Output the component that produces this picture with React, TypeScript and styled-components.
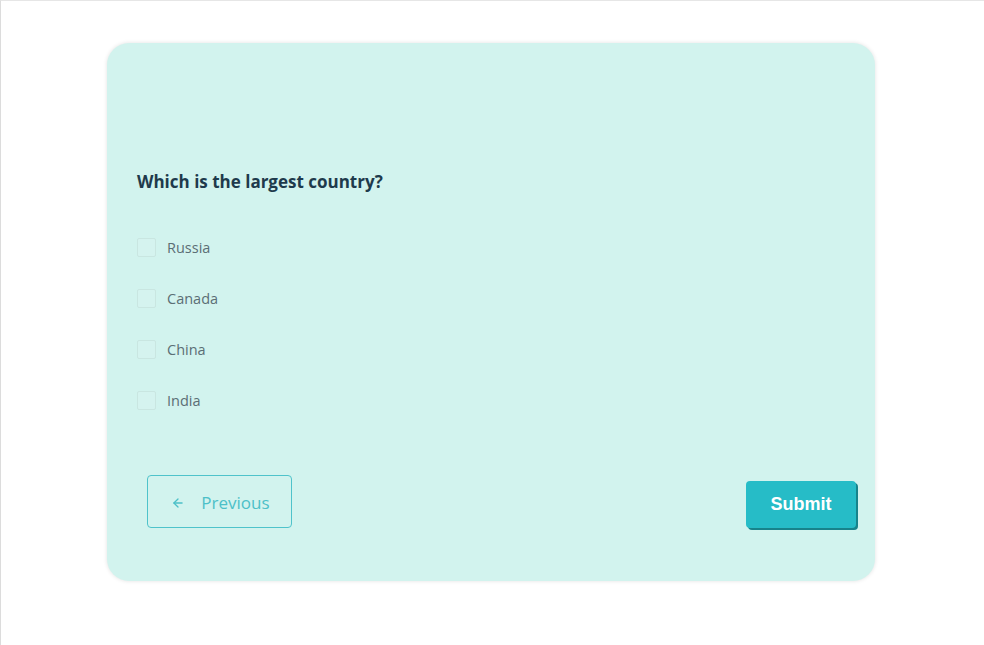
import styled, { createGlobalStyle } from 'styled-components';
import { ArrowLeft } from 'lucide-react';

const GlobalStyle = createGlobalStyle`
  html, body {
    margin: 0;
    padding: 0;
    background: #ffffff;
  }
  body {
    border-top: 1px solid #e6e6e6;
    border-left: 1px solid #dcdcdc;
    min-height: 645px;
    box-sizing: border-box;
    font-family: "Open Sans", "Noto Sans", sans-serif;
  }
`;

const Page = styled.div`
  display: flex;
  padding: 42px 0 0 106px;
`;

const QuizCard = styled.div`
  width: 768px;
  height: 538px;
  box-sizing: border-box;
  background: #d2f3ee;
  border-radius: 22px;
  box-shadow: 0 0 4px rgba(0, 0, 0, 0.12);
  padding: 127px 19px 53px 30px;
  display: flex;
  flex-direction: column;
`;

const Question = styled.h2`
  margin: 0 0 43px;
  font-size: 17px;
  font-weight: 700;
  color: #1e3a4c;
  line-height: 24px;
`;

const Options = styled.div`
  display: flex;
  flex-direction: column;
  gap: 31px;
`;

const Option = styled.label`
  display: flex;
  align-items: center;
  gap: 11px;
  font-size: 14.5px;
  color: #5b6e75;
  height: 20px;
`;

const Box = styled.span`
  width: 19px;
  height: 19px;
  box-sizing: border-box;
  border: 1px solid #c9e6e1;
  background: #d5f3ef;
  border-radius: 2px;
`;

const Footer = styled.div`
  margin-top: auto;
  display: flex;
  justify-content: space-between;
  align-items: flex-end;
  padding-left: 10px;
`;

const PrevButton = styled.button`
  width: 145px;
  height: 53px;
  display: flex;
  align-items: center;
  justify-content: center;
  gap: 16px;
  background: transparent;
  border: 1px solid #4fc3cb;
  border-radius: 4px;
  color: #4cc0c8;
  font-family: "Open Sans", "Noto Sans", sans-serif;
  font-size: 17px;
  padding: 2px 0 0 2px;

  svg {
    margin-top: 0;
  }
`;

const SubmitButton = styled.button`
  width: 110px;
  height: 47px;
  background: #26bcc7;
  border: none;
  border-radius: 4px;
  box-shadow: 2px 2px 0 #17838b;
  color: #ffffff;
  font-family: "Liberation Sans", Arial, sans-serif;
  font-weight: 700;
  font-size: 18px;
  padding: 0 0 1px;
`;

const options = ['Russia', 'Canada', 'China', 'India'];

export default function App() {
  return (
    <>
      <GlobalStyle />
      <Page>
        <QuizCard>
          <Question>Which is the largest country?</Question>
          <Options>
            {options.map((o) => (
              <Option key={o}>
                <Box />
                {o}
              </Option>
            ))}
          </Options>
          <Footer>
            <PrevButton>
              <ArrowLeft size={14} strokeWidth={2.25} />
              Previous
            </PrevButton>
            <SubmitButton>Submit</SubmitButton>
          </Footer>
        </QuizCard>
      </Page>
    </>
  );
}
